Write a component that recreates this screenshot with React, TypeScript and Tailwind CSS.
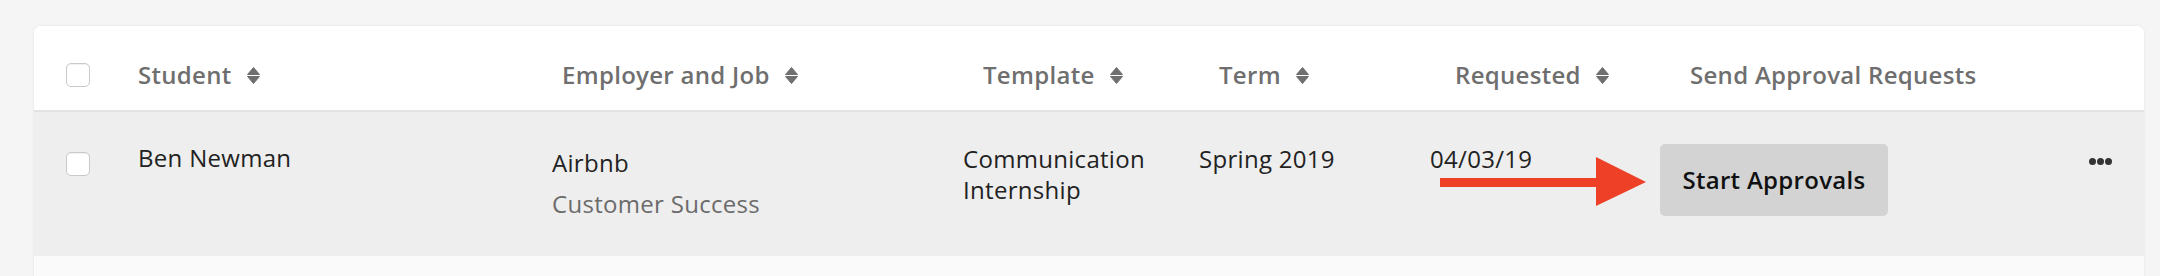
import React from "react";

const font = { fontFamily: "'Open Sans', 'Noto Sans', sans-serif" };

function SortIcon() {
  return (
    <svg width="13" height="17" viewBox="0 0 13 17" className="ml-[15px] shrink-0">
      <path d="M6.5 0.5 L12.5 7.5 H0.5 Z" fill="#6f6f6f" stroke="#6f6f6f" strokeLinejoin="round" />
      <path d="M0.5 9.5 H12.5 L6.5 16.5 Z" fill="#6f6f6f" stroke="#6f6f6f" strokeLinejoin="round" />
    </svg>
  );
}

function Checkbox() {
  return <div className="h-[24px] w-[24px] rounded-[5px] border border-[#c9c9c9] bg-white shadow-[inset_0_1px_1px_rgba(0,0,0,0.06)]" />;
}

function HeaderCell({ label, sortable = true, pad }: { label: string; sortable?: boolean; pad: string }) {
  return (
    <div className={`flex items-center ${pad}`}>
      <span>{label}</span>
      {sortable && <SortIcon />}
    </div>
  );
}

const cols = "grid grid-cols-[104px_414px_411px_236px_231px_230px_1fr]";

export default function App() {
  return (
    <div className="h-[276px] w-[2160px] overflow-hidden bg-[#f5f5f5] pt-[26px] pl-[34px] pr-[16px] tracking-[0.3px]" style={font}>
      <div className="h-[260px] rounded-t-[7px] bg-[#fafafa] shadow-[0_0_3px_rgba(0,0,0,0.08)]">
        <div className={`${cols} h-[86px] items-center rounded-t-[7px] border-b-2 border-[#e3e3e3] bg-white pt-[14px] text-[24px] font-semibold leading-[32px] text-[#6f6f6f]`}>
          <div className="pl-[32px]">
            <Checkbox />
          </div>
          <HeaderCell label="Student" pad="" />
          <HeaderCell label="Employer and Job" pad="pl-[10px]" />
          <HeaderCell label="Template" pad="pl-[20px]" />
          <HeaderCell label="Term" pad="pl-[20px]" />
          <HeaderCell label="Requested" pad="pl-[25px]" />
          <HeaderCell label="Send Approval Requests" sortable={false} pad="pl-[30px]" />
        </div>

        <div className={`${cols} h-[144px] bg-[#eeeeee] text-[24px] leading-[32px] text-[#222222]`}>
          <div className="pl-[32px] pt-[40px]">
            <Checkbox />
          </div>
          <div className="pt-[30px]">Ben Newman</div>
          <div className="pt-[35px]">
            <div>Airbnb</div>
            <div className="mt-[9px] text-[#6b6b6b]">Customer Success</div>
          </div>
          <div className="pt-[31px] leading-[31px]">
            Communication
            <br />
            Internship
          </div>
          <div className="pt-[31px]">Spring 2019</div>
          <div className="relative pt-[31px]">
            04/03/19
            <svg width="208" height="50" viewBox="0 0 208 50" className="absolute left-[10px] top-[45px]">
              <rect x="0" y="21" width="160" height="9" fill="#ee4026" />
              <path d="M156 0 L206 25 L156 49 Z" fill="#ee4026" />
            </svg>
          </div>
          <div className="flex items-start justify-between pr-[32px] pt-[32px]">
            <button className="h-[72px] w-[228px] rounded-[5px] bg-[#d3d3d3] text-[24px] font-semibold tracking-[0.3px] text-[#111111]">
              Start Approvals
            </button>
            <div className="mt-[14px] flex gap-[1px]">
              <span className="h-[7px] w-[7px] rounded-full bg-[#333333]" />
              <span className="h-[7px] w-[7px] rounded-full bg-[#333333]" />
              <span className="h-[7px] w-[7px] rounded-full bg-[#333333]" />
            </div>
          </div>
        </div>
      </div>
    </div>
  );
}
